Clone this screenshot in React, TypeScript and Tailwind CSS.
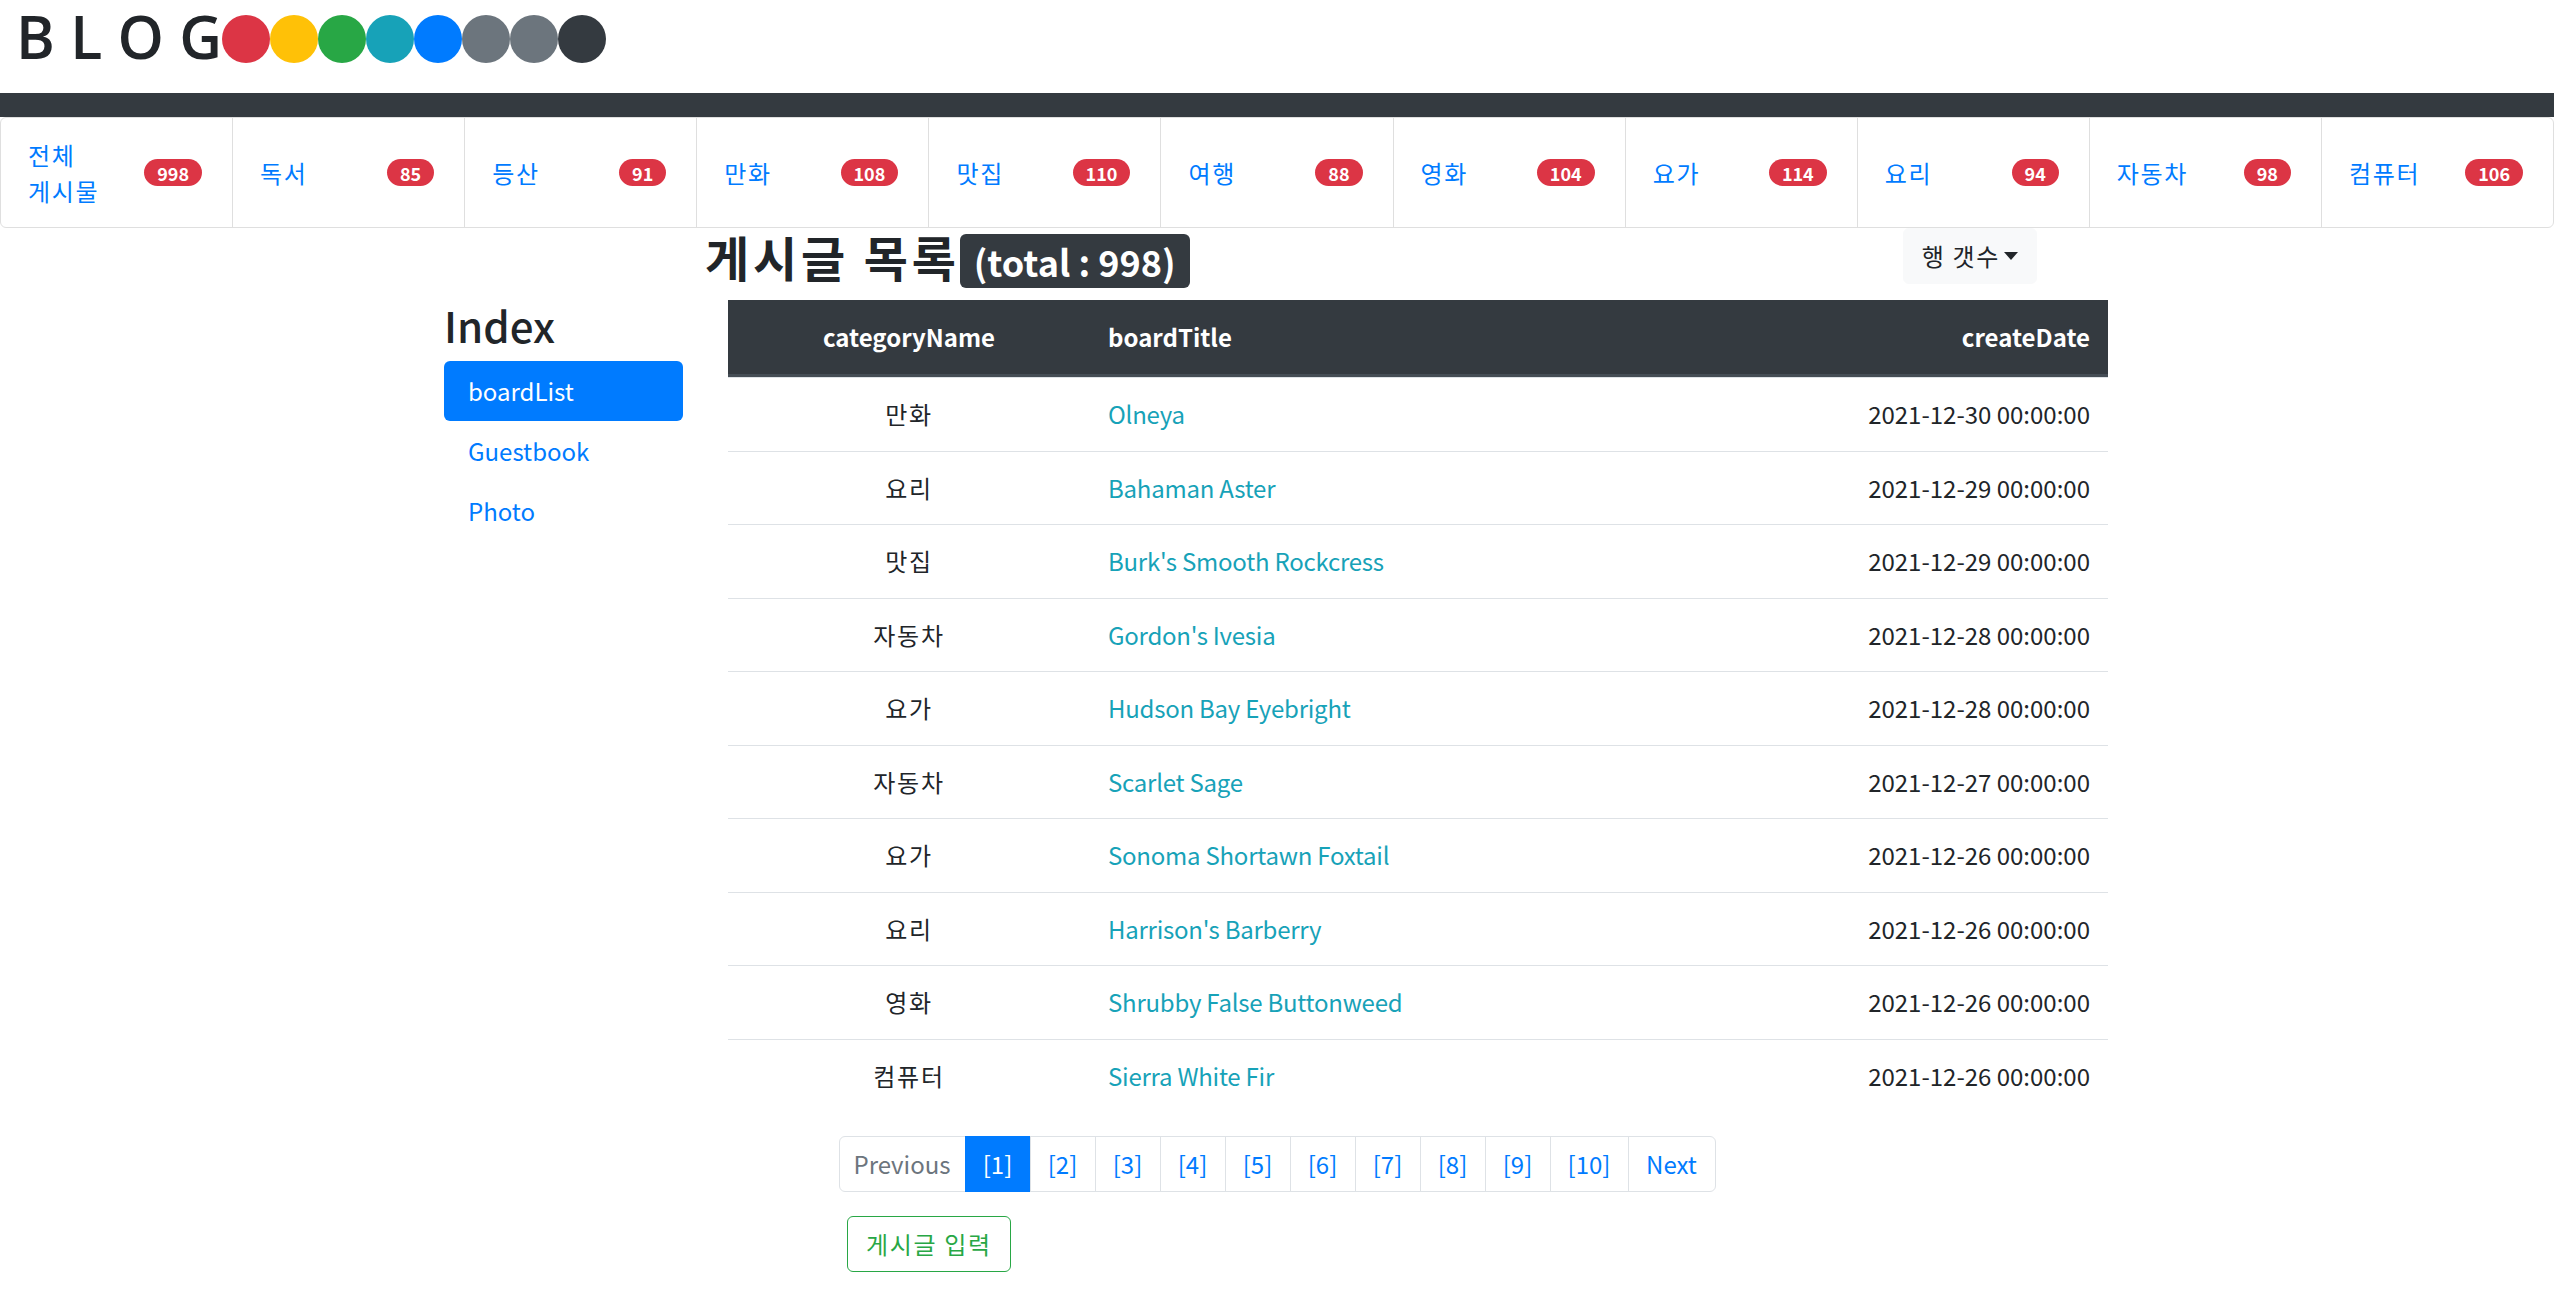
import React from 'react';

const CATEGORIES = [
  { name: '전체 게시물', count: 998 },
  { name: '독서', count: 85 },
  { name: '등산', count: 91 },
  { name: '만화', count: 108 },
  { name: '맛집', count: 110 },
  { name: '여행', count: 88 },
  { name: '영화', count: 104 },
  { name: '요가', count: 114 },
  { name: '요리', count: 94 },
  { name: '자동차', count: 98 },
  { name: '컴퓨터', count: 106 },
];

const DOTS = ['bg-[#dc3545]', 'bg-[#ffc107]', 'bg-[#28a745]', 'bg-[#17a2b8]', 'bg-[#007bff]', 'bg-[#6c757d]', 'bg-[#6c757d]', 'bg-[#343a40]'];

const ROWS = [
  { cat: '만화', title: 'Olneya', date: '2021-12-30 00:00:00' },
  { cat: '요리', title: 'Bahaman Aster', date: '2021-12-29 00:00:00' },
  { cat: '맛집', title: "Burk's Smooth Rockcress", date: '2021-12-29 00:00:00' },
  { cat: '자동차', title: "Gordon's Ivesia", date: '2021-12-28 00:00:00' },
  { cat: '요가', title: 'Hudson Bay Eyebright', date: '2021-12-28 00:00:00' },
  { cat: '자동차', title: 'Scarlet Sage', date: '2021-12-27 00:00:00' },
  { cat: '요가', title: 'Sonoma Shortawn Foxtail', date: '2021-12-26 00:00:00' },
  { cat: '요리', title: "Harrison's Barberry", date: '2021-12-26 00:00:00' },
  { cat: '영화', title: 'Shrubby False Buttonweed', date: '2021-12-26 00:00:00' },
  { cat: '컴퓨터', title: 'Sierra White Fir', date: '2021-12-26 00:00:00' },
];

const PAGES = ['[1]', '[2]', '[3]', '[4]', '[5]', '[6]', '[7]', '[8]', '[9]', '[10]'];

// hangul in the original renders a bit wider than Noto CJK
const KO = 'tracking-[0.07em]';

const App = () => {
  return (
    <div className="min-h-screen bg-white font-['Noto_Sans_CJK_KR',sans-serif] text-[24px] leading-[36px] text-[#212529]">
      {/* Logo header */}
      <header className="h-[93px] flex items-start pl-[16px]">
        <h1 className="font-['Open_Sans','Noto_Sans_CJK_KR',sans-serif] font-semibold text-[59px] leading-[72px] text-[#212529] whitespace-pre">
          B L O G
        </h1>
        <div className="flex mt-[15px]">
          {DOTS.map((c, i) => (
            <span key={i} className={`w-[48px] h-[48px] rounded-full ${c}`} />
          ))}
        </div>
      </header>
      <div className="h-[24px] bg-[#343a40]" />

      {/* Category nav */}
      <nav className="flex h-[111px]">
        {CATEGORIES.map((c, i) => (
          <CategoryItem key={c.name} name={c.name} count={c.count} first={i === 0} last={i === CATEGORIES.length - 1} />
        ))}
      </nav>

      {/* Main */}
      <main className="w-[1710px] mx-auto px-[22px]">
        <div className="flex">
          <aside className="w-[239px] shrink-0 mt-[72px]">
            <h3 className="text-[42px] leading-[50px] font-medium mb-[11px]">Index</h3>
            <div className="flex flex-col">
              <a className="px-[24px] py-[12px] rounded-[6px] bg-[#007bff] text-white">boardList</a>
              <a className="px-[24px] py-[12px] text-[#007bff]">Guestbook</a>
              <a className="px-[24px] py-[12px] text-[#007bff]">Photo</a>
            </div>
          </aside>

          <section className="flex-1 ml-[22px]">
            <div className="flex justify-between items-start mb-[12px]">
              <h2 className="text-[48px] leading-[57.6px] font-bold">
                <span className="tracking-[0.08em]">게시글 목록</span>
                <span className="inline-block px-[14px] py-[9px] text-[36px] leading-none rounded-[6px] bg-[#343a40] text-white">
                  (total : 998)
                </span>
              </h2>
              <button className="mr-[73px] h-[56px] px-[18px] flex items-center rounded-[6px] bg-[#f8f9fa] border border-[#f8f9fa] text-[#212529]">
                <span className={KO}>행 갯수</span>
                <span className="ml-[4px] w-0 h-0 border-t-[8px] border-t-[#212529] border-x-[7px] border-x-transparent" />
              </button>
            </div>

            <div className="ml-[23px] mr-[2px] mb-[24px]">
              <div className="flex h-[77px] items-center bg-[#343a40] border-b-[3px] border-[#454d55] text-white font-bold">
                <div className="w-[362px] text-center">categoryName</div>
                <div className="flex-1 pl-[18px]">boardTitle</div>
                <div className="w-[400px] text-right pr-[18px]">createDate</div>
              </div>
              {ROWS.map((r, i) => (
                <div key={i} className="flex h-[73.5px] items-center border-t border-[#dee2e6]">
                  <div className="w-[362px] text-center">
                    <span className={KO}>{r.cat}</span>
                  </div>
                  <div className="flex-1 pl-[18px]">
                    <a className="text-[#17a2b8] tracking-[-0.01em]">{r.title}</a>
                  </div>
                  <div className="w-[400px] text-right pr-[18px]">{r.date}</div>
                </div>
              ))}
            </div>
          </section>
        </div>

        {/* Pagination */}
        <div className="flex justify-center mb-[24px]">
          <ul className="flex">
            <li className="w-[127px] text-center py-[12px] leading-[30px] border border-[#dee2e6] rounded-l-[6px] text-[#6c757d]">Previous</li>
            {PAGES.map((p, i) => (
              <li
                key={p}
                className={
                  i === 0
                    ? 'w-[66px] text-center py-[12px] leading-[30px] border border-[#007bff] bg-[#007bff] text-white -ml-px'
                    : i === 9
                      ? 'w-[79px] text-center py-[12px] leading-[30px] border border-[#dee2e6] text-[#007bff] -ml-px'
                      : 'w-[66px] text-center py-[12px] leading-[30px] border border-[#dee2e6] text-[#007bff] -ml-px'
                }
              >
                {p}
              </li>
            ))}
            <li className="w-[88px] text-center py-[12px] leading-[30px] border border-[#dee2e6] rounded-r-[6px] text-[#007bff] -ml-px">Next</li>
          </ul>
        </div>

        <div className="pl-[403px] pb-[30px]">
          <button className="px-[18px] py-[9px] leading-[36px] rounded-[6px] border border-[#28a745] text-[#28a745]">
            <span className={KO}>게시글 입력</span>
          </button>
        </div>
      </main>
    </div>
  );
};

const CategoryItem = ({ name, count, first, last }: { name: string; count: number; first: boolean; last: boolean }) => {
  const parts = name.split(' ');
  return (
    <div
      className={`flex-1 flex items-center justify-between pl-[27px] pr-[30px] border border-[#dfdfdf] ${first ? 'rounded-l-[6px]' : '-ml-px'} ${
        last ? 'rounded-r-[6px]' : ''
      }`}
    >
      <span className={`text-[#007bff] ${KO}`}>
        {parts.map((p, i) => (
          <span key={i} className="block">
            {p}
          </span>
        ))}
      </span>
      <span className="px-[13px] py-[4.5px] rounded-full bg-[#dc3545] text-white text-[18px] leading-[18px] font-bold">
        {count}
      </span>
    </div>
  );
};

export default App;
